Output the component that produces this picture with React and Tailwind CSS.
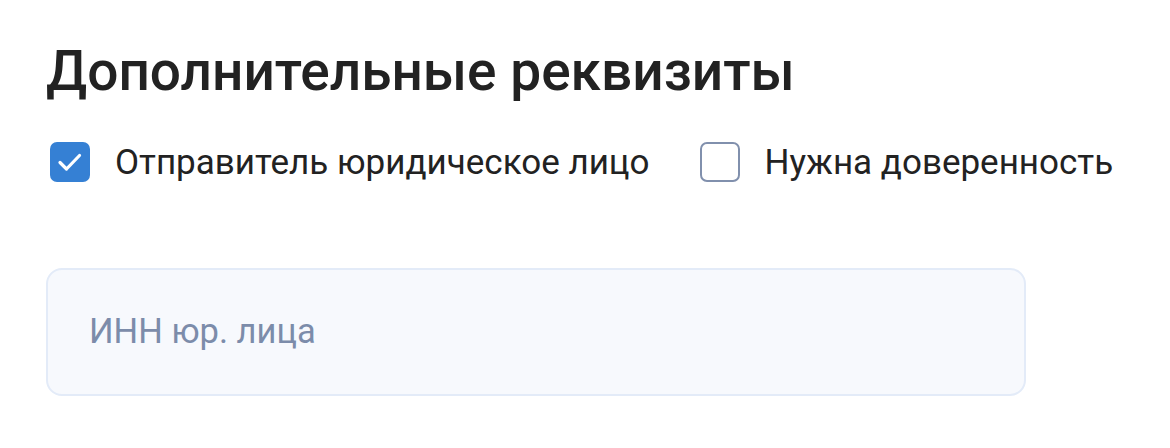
import React from "react";

function Check({ checked, label }) {
  return (
    <label className="flex items-center">
      {checked ? (
        <span className="flex h-[40px] w-[40px] items-center justify-center rounded-[7px] bg-[#3580d4]">
          <svg width="40" height="40" viewBox="0 0 40 40" fill="none" stroke="white" strokeWidth="3.2" strokeLinecap="round" strokeLinejoin="round">
            <path d="M10 20.5l6.5 6.5L29.5 13.5" />
          </svg>
        </span>
      ) : (
        <span className="box-border h-[40px] w-[40px] rounded-[7px] border-2 border-[#8190ad] bg-white" />
      )}
      <span className="ml-[25px] text-[35px] leading-none text-[#222222]">{label}</span>
    </label>
  );
}

export default function App() {
  return (
    <div className="h-[448px] w-[1170px] bg-white pl-[46px] pt-[39px]" style={{ fontFamily: "Roboto, 'Noto Sans', sans-serif" }}>
      <h1 className="text-[55px] font-medium leading-[64px] text-[#222222]">Дополнительные реквизиты</h1>
      <div className="mt-[39px] flex items-center gap-[50px] pl-[4px]">
        <Check checked label="Отправитель юридическое лицо" />
        <Check label="Нужна доверенность" />
      </div>
      <div className="mt-[86px] box-border flex h-[128px] w-[980px] items-center rounded-[16px] border-2 border-[#e3ebf8] bg-[#f7f9fd] pl-[41px]">
        <span className="text-[34.5px] text-[#7c8caa]">ИНН юр. лица</span>
      </div>
    </div>
  );
}
